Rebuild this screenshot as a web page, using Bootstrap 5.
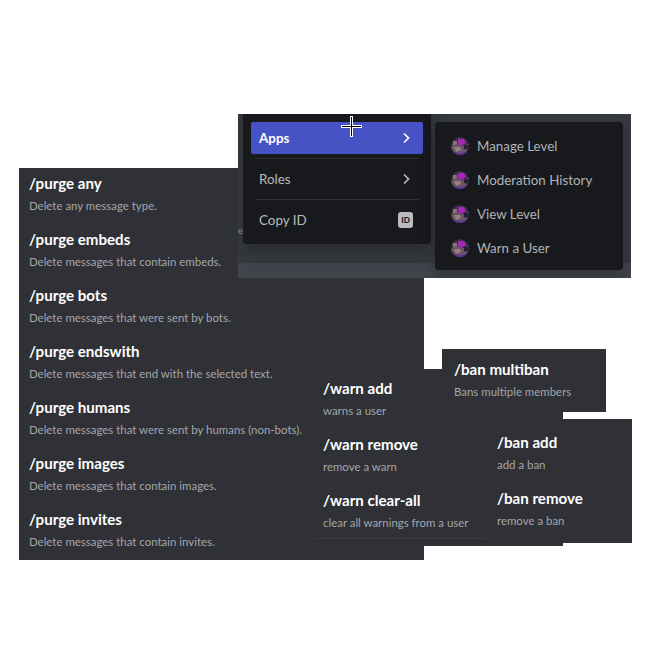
<!DOCTYPE html>
<html lang="en">
<head>
<meta charset="utf-8">
<title>Discord commands</title>
<link rel="stylesheet" href="https://cdn.jsdelivr.net/npm/bootstrap@5.3.0/dist/css/bootstrap.min.css">
<style>
html,body{margin:0;background:#fff}
body{font-family:"Lato","Open Sans",sans-serif}
.stage{position:relative;width:650px;height:650px;overflow:hidden;background:#fff}
.sheet{position:absolute;background:#2f3136}
.p-purge{left:19px;top:168px;width:405px;height:392px;padding:3px 10px}
.p-warn{left:314px;top:369px;width:249px;height:177px;padding:7px 9px}
.p-multi{left:442px;top:349px;width:164px;height:63px;padding:8px 12px}
.p-ban{left:490px;top:419px;width:142px;height:124px;padding:11px 7px}
.p-rule{position:absolute;left:0;bottom:7px;width:173px;height:1px;background:#3b3d43}
.cmd{height:56px}
.cmd-t{color:#fff;font-size:15.1px;font-weight:700;line-height:24px}
.cmd-d{color:#a3a6aa;font-size:11.45px;line-height:16px;margin-top:3px}
.shot{left:238px;top:114px;width:393px;height:164px;background:#36393f;overflow:hidden}
.shot-bar{position:absolute;left:0;right:0;bottom:0;height:15px;background:#40444b}
.shot-e{position:absolute;left:0;top:110px;color:#8e9297;font-size:10px;line-height:12px}
.cm{position:absolute;background:#18191c;border-radius:4px;box-shadow:0 8px 16px rgba(0,0,0,.24)}
.cm-main{left:5px;top:-10px;width:188px;height:140px;padding:18px 8px 0}
.cm-sub{left:197px;top:8px;width:188px;height:148px;padding:7px 8px}
.cm-item{height:32px;border-radius:2px;padding:0 8px;color:#b9bbbe;font-size:13.4px;display:flex;align-items:center;justify-content:space-between}
.cm-on{background:#4752c4;color:#fff;font-weight:700}
.cm-rule{height:1px;background:#2f3136;margin:4px}
.cm-chev{width:16px;height:16px;display:block}
.cm-id{width:15px;height:16px;border-radius:3px;background:#b9bbbe;color:#18191c;font-size:8px;font-weight:900;display:flex;align-items:center;justify-content:center;margin-right:2px}
.cm-app{height:34px;padding:0 8px;color:#b0b3b7;font-size:13.35px;display:flex;align-items:center;gap:8px}
.cm-ava{width:18px;height:18px;display:block;flex:none}
.xhair{position:absolute;left:341px;top:116px;width:21px;height:21px}
</style>
</head>
<body>
<div class="stage">
  <section class="sheet p-purge">
    <div class="cmd"><div class="cmd-t">/purge any</div><div class="cmd-d">Delete any message type.</div></div>
    <div class="cmd"><div class="cmd-t">/purge embeds</div><div class="cmd-d">Delete messages that contain embeds.</div></div>
    <div class="cmd"><div class="cmd-t">/purge bots</div><div class="cmd-d">Delete messages that were sent by bots.</div></div>
    <div class="cmd"><div class="cmd-t">/purge endswith</div><div class="cmd-d">Delete messages that end with the selected text.</div></div>
    <div class="cmd"><div class="cmd-t">/purge humans</div><div class="cmd-d">Delete messages that were sent by humans (non-bots).</div></div>
    <div class="cmd"><div class="cmd-t">/purge images</div><div class="cmd-d">Delete messages that contain images.</div></div>
    <div class="cmd"><div class="cmd-t">/purge invites</div><div class="cmd-d">Delete messages that contain invites.</div></div>
  </section>

  <section class="sheet p-warn">
    <div class="cmd"><div class="cmd-t">/warn add</div><div class="cmd-d">warns a user</div></div>
    <div class="cmd"><div class="cmd-t">/warn remove</div><div class="cmd-d">remove a warn</div></div>
    <div class="cmd"><div class="cmd-t">/warn clear-all</div><div class="cmd-d">clear all warnings from a user</div></div>
    <div class="p-rule"></div>
  </section>

  <section class="sheet p-ban">
    <div class="cmd"><div class="cmd-t">/ban add</div><div class="cmd-d">add a ban</div></div>
    <div class="cmd"><div class="cmd-t">/ban remove</div><div class="cmd-d">remove a ban</div></div>
  </section>

  <section class="sheet p-multi">
    <div class="cmd"><div class="cmd-t">/ban multiban</div><div class="cmd-d">Bans multiple members</div></div>
  </section>

  <section class="sheet shot">
    <div class="shot-e">e</div>
    <div class="shot-bar"></div>
    <div class="cm cm-main">
      <div class="cm-item cm-on">Apps
        <svg class="cm-chev" viewBox="0 0 16 16"><path d="M5 3.5 9.5 8 5 12.5" fill="none" stroke="currentColor" stroke-width="1.7"/></svg>
      </div>
      <div class="cm-rule"></div>
      <div class="cm-item">Roles
        <svg class="cm-chev" viewBox="0 0 16 16"><path d="M5 3.5 9.5 8 5 12.5" fill="none" stroke="currentColor" stroke-width="1.7"/></svg>
      </div>
      <div class="cm-rule"></div>
      <div class="cm-item">Copy ID <span class="cm-id">ID</span></div>
    </div>
    <div class="cm cm-sub">
      <div class="cm-app"><svg class="cm-ava" viewBox="0 0 18 18"><use href="#ava"/></svg>Manage Level</div>
      <div class="cm-app"><svg class="cm-ava" viewBox="0 0 18 18"><use href="#ava"/></svg>Moderation History</div>
      <div class="cm-app"><svg class="cm-ava" viewBox="0 0 18 18"><use href="#ava"/></svg>View Level</div>
      <div class="cm-app"><svg class="cm-ava" viewBox="0 0 18 18"><use href="#ava"/></svg>Warn a User</div>
    </div>
  </section>

  <svg width="0" height="0" class="position-absolute">
    <defs>
      <clipPath id="avc"><circle cx="9" cy="9" r="9"/></clipPath>
      <g id="ava" clip-path="url(#avc)">
        <rect width="18" height="18" fill="#3d2f48"/>
        <path d="M0 10 6 7l5 2 7-2v11H0z" fill="#6b5464"/>
        <path d="M7 2h6l2 4-5 3-3-2z" fill="#a12bb5"/>
        <path d="M2 4h4v3L2 9z" fill="#8a7478"/>
        <path d="M3 10h6l1 3-5 2z" fill="#98807e"/>
        <path d="M2 14c4 3 9 3 14 0v4H2z" fill="#5b2f9e"/>
        <path d="M13 8h5v5l-5-1z" fill="#2a2036"/>
      </g>
    </defs>
  </svg>

  <svg class="xhair" viewBox="0 0 21 21">
    <path d="M10.5 0v21M0 10.5h21" stroke="#fff" stroke-width="3"/>
    <path d="M10.5 1v19M1 10.5h19" stroke="#000" stroke-width="1"/>
  </svg>
</div>
<script src="https://cdn.jsdelivr.net/npm/bootstrap@5.3.0/dist/js/bootstrap.bundle.min.js"></script>
</body>
</html>
